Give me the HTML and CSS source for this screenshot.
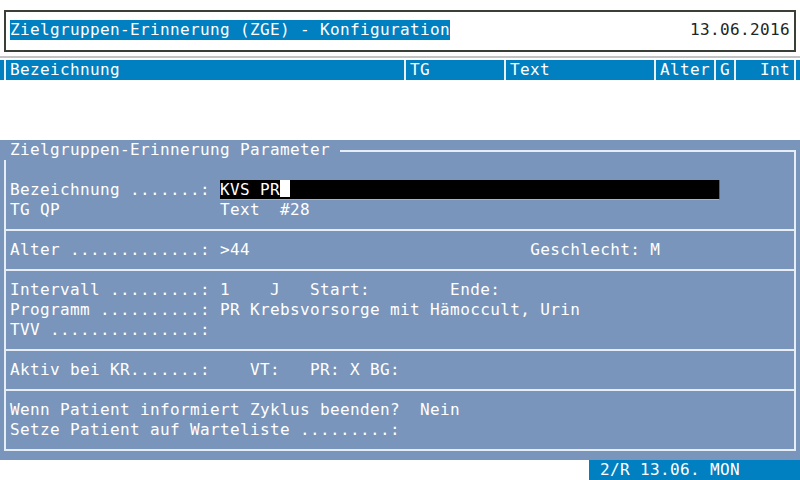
FILE: index.html
```html
<!DOCTYPE html>
<html lang="de">
  <head>
    <meta charset="UTF-8" />
    <meta name="viewport" content="width=device-width, initial-scale=1.0" />
    <title>ZGE Konfiguration</title>
    <link rel="stylesheet" href="styles.css">
  </head>
  <body>
    <div class="screen">
      <div class="titlebox">
        <span class="title">Zielgruppen-Erinnerung (ZGE) - Konfiguration</span>
        <span class="date">13.06.2016</span>
      </div>
      <div class="rule"></div>

      <div class="header">
        <span class="cell c-bez">Bezeichnung</span>
        <span class="cell c-tg">TG</span>
        <span class="cell c-text">Text</span>
        <span class="cell c-alter">Alter</span>
        <span class="cell c-g">G</span>
        <span class="cell c-int">Int</span>
      </div>

      <div class="panel">
        <div class="legend">
          <span class="legend-text">Zielgruppen-Erinnerung Parameter</span>
          <span class="legend-line"></span>
        </div>
        <div class="frame">
          <div class="section first">
            <div class="line">Bezeichnung .......: <span class="input">KVS PR<span class="cursor"></span></span></div>
            <div class="line">TG QP                Text  #28</div>
          </div>
          <div class="section">
            <div class="line">Alter .............: &gt;44                            Geschlecht: M</div>
          </div>
          <div class="section">
            <div class="line">Intervall .........: 1    J   Start:        Ende:</div>
            <div class="line">Programm ..........: PR Krebsvorsorge mit Hämoccult, Urin</div>
            <div class="line">TVV ...............:</div>
          </div>
          <div class="section">
            <div class="line">Aktiv bei KR.......:    VT:   PR: X BG:</div>
          </div>
          <div class="section">
            <div class="line">Wenn Patient informiert Zyklus beenden?  Nein</div>
            <div class="line">Setze Patient auf Warteliste .........:</div>
          </div>
        </div>
      </div>

      <div class="status">
        <span class="status-text">2/R 13.06. MON</span>
      </div>
    </div>
  </body>
</html>
```

FILE: styles.css
```css
* {
  box-sizing: border-box;
}
body {
  margin: 0;
  background-color: #ffffff;
  font-family: "DejaVu Sans Mono", "Liberation Mono", monospace;
  font-size: 16px;
  letter-spacing: 0.37px;
  line-height: 20px;
}
.screen {
  width: 800px;
  height: 480px;
  overflow: hidden;
}

/* title box */
.titlebox {
  margin: 10px 4px 0 4px;
  height: 42px;
  border: 2px solid #3a3f38;
  padding: 8px 4px 0 4px;
  display: flex;
  justify-content: space-between;
}
.title {
  background-color: #0080c0;
  color: #ffffff;
  height: 20px;
  white-space: pre;
}
.date {
  color: #1c2626;
}
.rule {
  margin-top: 4px;
  height: 2px;
  background-color: #c4c4c4;
}

/* list header */
.header {
  margin-top: 2px;
  height: 20px;
  background-color: #0080c0;
  color: #ffffff;
  display: flex;
  padding-left: 4px;
}
.cell {
  border-left: 2px solid #e8f0f8;
  padding-left: 4px;
  height: 20px;
}
.c-bez { width: 400px; }
.c-tg { width: 100px; }
.c-text { width: 150px; }
.c-alter { width: 60px; }
.c-g { width: 20px; }
.c-int {
  width: 62px;
  text-align: right;
  padding-right: 4px;
  border-right: 2px solid #e8f0f8;
}

/* parameter panel */
.panel {
  margin-top: 60px;
  height: 320px;
  background-color: #7995bb;
  color: #ffffff;
}
.legend {
  height: 20px;
  display: flex;
  padding-right: 4px;
}
.legend-text {
  padding-left: 10px;
  white-space: pre;
}
.legend-line {
  flex: 1;
  margin-left: 10px;
  margin-top: 10px;
  height: 10px;
  border-top: 2px solid #e6edf5;
  border-right: 2px solid #e6edf5;
}
.frame {
  margin: 0 4px;
  height: 291px;
  border-left: 2px solid #e6edf5;
  border-right: 2px solid #e6edf5;
  border-bottom: 2px solid #e6edf5;
}
.section {
  border-top: 2px solid #e6edf5;
  padding: 9px 0 9px 4px;
}
.section.first {
  border-top: none;
  padding-top: 20px;
}
.line {
  height: 20px;
  white-space: pre;
}
.input {
  display: inline-block;
  vertical-align: top;
  width: 500px;
  height: 20px;
  background-color: #000000;
  border-bottom: 1px solid #a8b4c0;
  border-right: 1px solid #5a6470;
}
.cursor {
  display: inline-block;
  vertical-align: top;
  width: 10px;
  height: 17px;
  background-color: #ffffff;
}

/* status line */
.status {
  height: 20px;
  display: flex;
  justify-content: flex-end;
}
.status-text {
  width: 211px;
  padding-left: 11px;
  background-color: #0080c0;
  color: #ffffff;
  white-space: pre;
}
```
